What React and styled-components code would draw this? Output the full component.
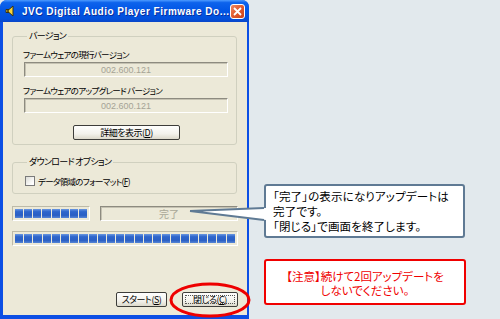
import React from 'react';
import styled, { createGlobalStyle } from 'styled-components';

const GlobalStyle = createGlobalStyle`
    html, body {
        margin: 0;
        padding: 0;
        background: #e2e9ed;
    }
    body {
        font-family: "Noto Sans CJK JP", sans-serif;
        font-feature-settings: "palt";
    }
`;

const Page = styled.div`
    width: 500px;
    height: 319px;
    display: flex;
    align-items: flex-start;
    overflow: hidden;
`;

const Window = styled.div`
    width: 249px;
    height: 319px;
    display: flex;
    flex-direction: column;
    flex-shrink: 0;
    background: #0c4fe4;
    border-radius: 7px 7px 0 0;
    box-sizing: border-box;
`;

const TitleBar = styled.div`
    height: 22px;
    display: flex;
    align-items: center;
    padding: 0 4px 0 5px;
    border-radius: 7px 7px 0 0;
    background: linear-gradient(to bottom, #4d9bff 0%, #0d63ec 12%, #0257e6 45%, #0250dc 85%, #0a46c8 100%);
`;

const Title = styled.div`
    flex: 1;
    min-width: 0;
    margin-left: 5px;
    font-family: "Liberation Sans", Arial, sans-serif;
    font-weight: bold;
    font-size: 10px;
    letter-spacing: 0.5px;
    color: #fff;
    text-shadow: 1px 1px 0 #0a2e9a;
    white-space: nowrap;
    overflow: hidden;
`;

const CloseButton = styled.div`
    flex-shrink: 0;
    width: 13px;
    height: 13px;
    border: 1px solid #fff;
    border-radius: 3px;
    background: linear-gradient(135deg, #f08862 0%, #e05a2e 50%, #c9421a 100%);
    display: flex;
    align-items: center;
    justify-content: center;
`;

const Client = styled.div`
    flex: 1;
    margin: 0 2px 4px 3px;
    background: #ece9d8;
    display: flex;
    flex-direction: column;
    padding: 8px 9px 8px 9px;
    font-size: 8.5px;
    letter-spacing: -0.7px;
    color: #000;
`;

const Group = styled.fieldset`
    margin: ${p => p.$top || 0}px 1px 0 0;
    padding: 0 8px ${p => p.$bottom || 0}px 10px;
    border: 1px solid #d0d0bf;
    border-radius: 3px;
    min-width: 0;
`;

const Legend = styled.legend`
    padding: 0 2px;
    margin-left: 4px;
    font-size: 9px;
    line-height: 12px;
    color: #000;
`;

const Label = styled.div`
    margin-top: ${p => p.$top}px;
    height: 13px;
    line-height: 13px;
    white-space: nowrap;
`;

const TextBox = styled.div`
    margin: 1px 0 0 1px;
    height: 15px;
    box-sizing: border-box;
    border: 1px solid #fff;
    border-top-color: #8d8b80;
    border-left-color: #8d8b80;
    box-shadow: inset 1px 1px 0 #c5c2b2;
    display: flex;
    align-items: center;
    justify-content: center;
    font-family: "Liberation Sans", Arial, sans-serif;
    font-size: 9px;
    letter-spacing: 0;
    color: #a5a396;
`;

const Button = styled.div`
    height: 15px;
    width: ${p => p.$w}px;
    box-sizing: border-box;
    border: 1px solid #3d3d3a;
    border-radius: 2px;
    background: linear-gradient(to bottom, #fefefd 0%, #f3f2ec 60%, #dcd9cb 100%);
    display: flex;
    align-items: center;
    justify-content: center;
    font-size: 9px;
    letter-spacing: -0.5px;
    white-space: nowrap;
    position: relative;
`;

const DetailRow = styled.div`
    display: flex;
    margin: 12px 0 0 50px;
`;

const FocusRing = styled.div`
    position: absolute;
    inset: 2px;
    border: 1px dotted #555;
`;

const CheckRow = styled.div`
    display: flex;
    align-items: center;
    height: 10px;
    line-height: 10px;
    margin-top: 8px;
    gap: 3px;
    padding-left: 2px;
`;

const CheckBox = styled.div`
    width: 10px;
    height: 10px;
    box-sizing: border-box;
    border: 1px solid #7a7a7a;
    background: linear-gradient(135deg, #dcdcd6 0%, #fff 80%);
`;

const ProgressRow = styled.div`
    display: flex;
    gap: 10px;
    margin-top: 12px;
`;

const Progress = styled.div`
    width: ${p => p.$w}px;
    height: 15px;
    box-sizing: border-box;
    border: 1px solid #fff;
    border-top-color: #bdbaa8;
    border-left-color: #bdbaa8;
    padding: 2px;
    display: flex;
    gap: 1px;
    margin-top: ${p => p.$top || 0}px;
`;

const Block = styled.div`
    flex: 1;
    background: linear-gradient(to bottom, #6a97e0 0%, #2e66cc 30%, #2a5fc4 70%, #5786d6 100%);
`;

const Status = styled(TextBox)`
    width: 138px;
    margin: 0;
    font-family: "Noto Sans CJK JP", sans-serif;
    font-size: 10px;
    color: #a9a797;
`;

const ButtonRow = styled.div`
    margin-top: auto;
    display: flex;
    justify-content: flex-end;
    gap: 15px;
`;

const Marked = styled.div`
    position: relative;
`;

const Ellipse = styled.svg`
    position: absolute;
    left: -13px;
    top: -10px;
    pointer-events: none;
`;

const Notes = styled.div`
    display: flex;
    flex-direction: column;
    margin-left: 15px;
    padding-top: 184px;
    gap: 21px;
`;

const Callout = styled.div`
    position: relative;
    width: 201px;
    height: 54px;
    box-sizing: border-box;
    border: 2px solid #5f7a94;
    border-radius: 3px;
    background: #fff;
    padding: 3px 0 0 7px;
    font-size: 11.5px;
    line-height: 15px;
    letter-spacing: 0.15px;
    color: #000;
    white-space: nowrap;
`;

const Pointer = styled.svg`
    position: absolute;
    left: -78px;
    top: 18px;
    overflow: visible;
`;

const Warning = styled.div`
    width: 202px;
    height: 46px;
    box-sizing: border-box;
    border: 2px solid #f00000;
    border-radius: 3px;
    background: #fff;
    display: flex;
    flex-direction: column;
    align-items: center;
    justify-content: center;
    padding-top: 2px;
    font-size: 11.5px;
    line-height: 14.5px;
    color: #f00000;
    white-space: nowrap;
`;

function Blocks({ count }) {
    return Array.from({ length: count }, (_, i) => <Block key={i} />);
}

function SpeakerIcon() {
    return (
        <svg width="12" height="12" viewBox="0 0 12 12">
            <path d="M1 4.5 L4 4.5 L8 1 L8 11 L4 7.5 L1 7.5 Z" fill="#f7d43a" stroke="#3b3410" strokeWidth="1" strokeLinejoin="round" />
            <circle cx="3" cy="6" r="1" fill="#3b3410" />
        </svg>
    );
}

export default function App() {
    return (
        <>
            <GlobalStyle />
            <Page>
                <Window>
                    <TitleBar>
                        <SpeakerIcon />
                        <Title>JVC Digital Audio Player Firmware Do...</Title>
                        <CloseButton>
                            <svg width="9" height="9" viewBox="0 0 9 9">
                                <path d="M1 1 L8 8 M8 1 L1 8" stroke="#fff" strokeWidth="1.8" />
                            </svg>
                        </CloseButton>
                    </TitleBar>
                    <Client>
                        <Group $bottom={4}>
                            <Legend>バージョン</Legend>
                            <Label $top={6}>ファームウェアの現行バージョン</Label>
                            <TextBox>002.600.121</TextBox>
                            <Label $top={7}>ファームウェアのアップグレード バージョン</Label>
                            <TextBox>002.600.121</TextBox>
                            <DetailRow>
                                <Button $w={107}>詳細を表示(<u>D</u>)</Button>
                            </DetailRow>
                        </Group>
                        <Group $top={11} $bottom={7}>
                            <Legend>ダウンロード オプション</Legend>
                            <CheckRow>
                                <CheckBox />
                                <span>データ領域のフォーマット(<u>F</u>)</span>
                            </CheckRow>
                        </Group>
                        <ProgressRow>
                            <Progress $w={78}><Blocks count={8} /></Progress>
                            <Status>完了</Status>
                        </ProgressRow>
                        <Progress $w={226} $top={10}><Blocks count={24} /></Progress>
                        <ButtonRow>
                            <Button $w={51}>スタート(<u>S</u>)</Button>
                            <Marked>
                                <Button $w={56}>
                                    閉じる(<u>C</u>)
                                    <FocusRing />
                                </Button>
                                <Ellipse width="82" height="36" viewBox="0 0 82 36">
                                    <ellipse cx="41" cy="18" rx="39" ry="16" fill="none" stroke="#ee0000" strokeWidth="3" />
                                </Ellipse>
                            </Marked>
                        </ButtonRow>
                    </Client>
                </Window>
                <Notes>
                    <Callout>
                        <Pointer width="82" height="18" viewBox="0 0 82 18">
                            <polygon points="2,7 78,4 82,4 82,16 78,16" fill="#fff" />
                            <path d="M2 7 L76 4 M2 7 L76 16" stroke="#5f7a94" strokeWidth="2" fill="none" />
                        </Pointer>
                        「完了」の表示になりアップデートは<br />
                        完了です。<br />
                        「閉じる」で画面を終了します。
                    </Callout>
                    <Warning>
                        <div>【注意】続けて2回アップデートを</div>
                        <div>しないでください。</div>
                    </Warning>
                </Notes>
            </Page>
        </>
    );
}
